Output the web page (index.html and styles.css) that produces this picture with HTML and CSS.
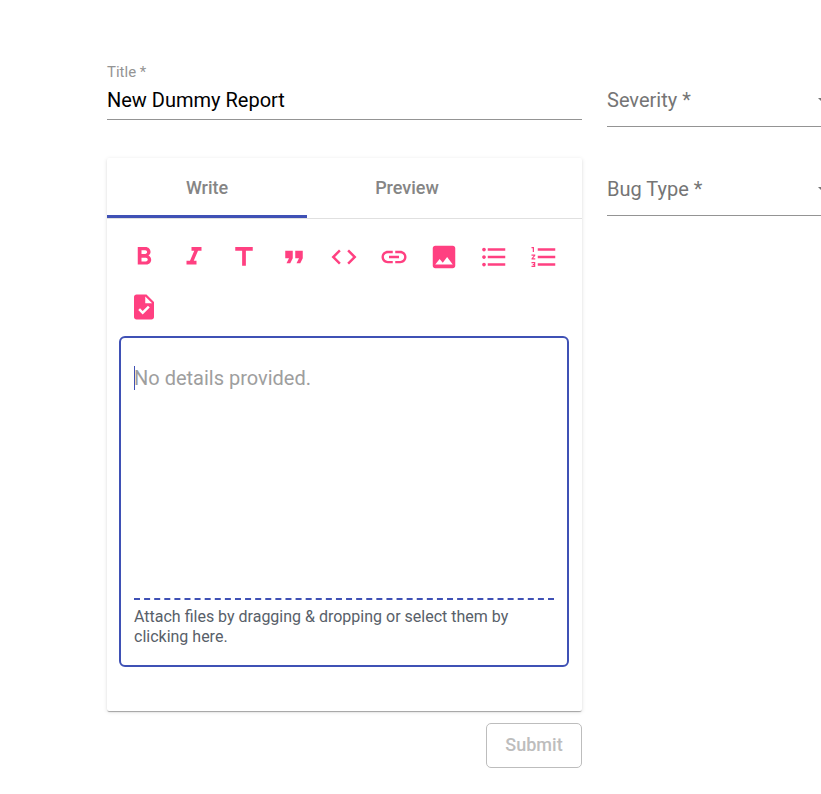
FILE: index.html
```html
<!DOCTYPE html>
<html lang="en">
<head>
<meta charset="utf-8">
<meta name="viewport" content="width=device-width, initial-scale=1">
<title>New report</title>
<link rel="stylesheet" href="styles.css">
</head>
<body>
<form class="report">
  <div class="main">
    <div class="title-field">
      <label for="title">Title *</label>
      <input id="title" type="text" value="New Dummy Report">
    </div>

    <section class="card">
      <div class="tabs" role="tablist">
        <button class="tab active" type="button" role="tab" aria-selected="true">Write</button>
        <button class="tab" type="button" role="tab" aria-selected="false">Preview</button>
      </div>
      <div class="editor">
        <div class="toolbar">
          <button class="tool" type="button" aria-label="Bold"><svg viewBox="0 0 24 24"><path d="M15.6 10.79c.97-.67 1.65-1.77 1.65-2.79 0-2.26-1.75-4-4-4H7v14h7.04c2.09 0 3.71-1.7 3.71-3.79 0-1.52-.86-2.82-2.15-3.42zM10 6.500h3c.83 0 1.5.67 1.5 1.500s-.67 1.500-1.5 1.500h-3v-3zm3.500 9H10v-3h3.500c.83 0 1.500.67 1.500 1.500s-.67 1.500-1.500 1.500z"/></svg></button>
          <button class="tool" type="button" aria-label="Italic"><svg viewBox="0 0 24 24"><path d="M10 4v3h2.210l-3.420 8H6v3h8v-3h-2.210l3.420-8H18V4z"/></svg></button>
          <button class="tool" type="button" aria-label="Heading"><svg viewBox="0 0 24 24"><path d="M5 4v3h5.500v12h3V7H19V4z"/></svg></button>
          <button class="tool" type="button" aria-label="Quote"><svg viewBox="0 0 24 24"><path d="M6 17h3l2-4V7H5v6h3zm8 0h3l2-4V7h-6v6h3z"/></svg></button>
          <button class="tool" type="button" aria-label="Code"><svg viewBox="0 0 24 24"><path d="M9.400 16.600L4.800 12l4.600-4.600L8 6l-6 6 6 6 1.400-1.400zm5.200 0l4.600-4.600-4.600-4.600L16 6l6 6-6 6-1.400-1.400z"/></svg></button>
          <button class="tool" type="button" aria-label="Link"><svg viewBox="0 0 24 24"><path d="M3.900 12c0-1.710 1.390-3.100 3.100-3.100h4V7H7c-2.760 0-5 2.240-5 5s2.240 5 5 5h4v-1.900H7c-1.710 0-3.100-1.390-3.100-3.100zM8 13h8v-2H8v2zm9-6h-4v1.900h4c1.710 0 3.100 1.390 3.100 3.100s-1.390 3.100-3.100 3.100h-4V17h4c2.760 0 5-2.240 5-5s-2.240-5-5-5z"/></svg></button>
          <button class="tool" type="button" aria-label="Image"><svg viewBox="0 0 24 24"><path d="M21 19V5c0-1.100-.9-2-2-2H5c-1.100 0-2 .9-2 2v14c0 1.100.9 2 2 2h14c1.100 0 2-.9 2-2zM8.500 13.500l2.500 3.010L14.500 12l4.500 6H5l3.500-4.500z"/></svg></button>
          <button class="tool" type="button" aria-label="Bulleted list"><svg viewBox="0 0 24 24"><path d="M4 10.500c-.83 0-1.500.67-1.500 1.500s.67 1.500 1.500 1.500 1.500-.67 1.500-1.500-.67-1.500-1.500-1.500zm0-6c-.83 0-1.500.67-1.500 1.500S3.170 7.500 4 7.500 5.500 6.830 5.500 6 4.830 4.500 4 4.500zm0 12c-.83 0-1.500.68-1.500 1.500s.68 1.500 1.500 1.500 1.500-.68 1.500-1.500-.67-1.500-1.500-1.500zM7 19h14v-2H7v2zm0-6h14v-2H7v2zm0-8v2h14V5H7z"/></svg></button>
          <button class="tool" type="button" aria-label="Numbered list"><svg viewBox="0 0 24 24"><path d="M2 17h2v.5H3v1h1v.5H2v1h3v-4H2v1zm1-9h1V4H2v1h1v3zm-1 3h1.800L2 13.100v.9h3v-1H3.200L5 10.900V10H2v1zm5-6v2h14V5H7zm0 14h14v-2H7v2zm0-6h14v-2H7v2z"/></svg></button>
          <button class="tool" type="button" aria-label="Task"><svg viewBox="0 0 24 24"><path d="M14 2H6c-1.100 0-1.990.9-1.990 2L4 20c0 1.100.89 2 1.990 2H18c1.100 0 2-.9 2-2V8l-6-6zm-3.060 16L7.400 14.460l1.410-1.410 2.120 2.120 4.240-4.240 1.410 1.410L10.940 18zM13 9V3.500L18.500 9H13z"/></svg></button>
        </div>
        <div class="box">
          <textarea class="details" aria-label="Details" placeholder="No details provided."></textarea>
          <button class="attach" type="button">Attach files by dragging &amp; dropping or select them by clicking here.</button>
        </div>
      </div>
    </section>

    <button class="submit" type="submit" disabled>Submit</button>
  </div>

  <div class="side">
    <div class="select-field">
      <select id="severity"><option value=""></option><option>Low</option><option>High</option></select>
      <label for="severity">Severity *</label>
      <span class="arrow"></span>
    </div>
    <div class="select-field">
      <select id="bug-type"><option value=""></option><option>Crash</option><option>Display</option></select>
      <label for="bug-type">Bug Type *</label>
      <span class="arrow"></span>
    </div>
  </div>
</form>
</body>
</html>
```

FILE: styles.css
```css
* {
  box-sizing: border-box;
}

body {
  margin: 0;
  overflow-x: clip;
  background: #fff;
  font-family: Roboto, sans-serif;
}

button,
input,
select,
textarea {
  margin: 0;
  padding: 0;
  border: 0;
  outline: 0;
  background: transparent;
  font-family: inherit;
}

.report {
  display: grid;
  grid-template-columns: 19fr 9fr;
  column-gap: 25px;
  align-items: start;
  margin: 0 -11px 0 107px;
  padding: 62px 0 26px;
}

.main {
  display: flex;
  flex-direction: column;
}

.title-field {
  display: flex;
  flex-direction: column;
  border-bottom: 1px solid #949494;
  margin-bottom: 38px;
}

.title-field label {
  font-size: 15px;
  line-height: 20px;
  color: #949494;
}

.title-field input {
  height: 37px;
  padding-bottom: 2px;
  font-size: 20px;
  color: #000;
}

.card {
  border-radius: 2px;
  box-shadow: 0 2px 1px -1px rgba(0, 0, 0, 0.2), 0 1px 1px rgba(0, 0, 0, 0.14), 0 1px 4px rgba(0, 0, 0, 0.12);
}

.tabs {
  display: flex;
  border-bottom: 1px solid #e0e0e0;
}

.tab {
  width: 200px;
  height: 60px;
  padding-top: 1px;
  border-bottom: 3px solid transparent;
  font-size: 18px;
  font-weight: 500;
  color: #858585;
}

.tab.active {
  border-bottom-color: #3f51b5;
}

.editor {
  padding: 13px 13px 44px 12px;
}

.toolbar {
  display: flex;
  flex-wrap: wrap;
  margin-bottom: 4px;
}

.tool {
  display: grid;
  place-items: center;
  width: 50px;
  height: 50px;
}

.tool svg {
  width: 30px;
  height: 30px;
  fill: #ff4081;
}

.box {
  position: relative;
  padding: 13px 13px 18px;
  border: 2px solid #3f51b5;
  border-radius: 6px;
}

.box::before {
  content: "";
  position: absolute;
  top: 28px;
  left: 13px;
  width: 1px;
  height: 24px;
  background: #3f51b5;
}

.details {
  display: block;
  width: 100%;
  height: 247px;
  padding-top: 15px;
  resize: none;
  font-size: 20px;
  line-height: 24px;
}

.details::placeholder {
  color: #9e9e9e;
}

.attach {
  display: block;
  width: 100%;
  padding-top: 7px;
  border-top: 2px dashed #3f51b5;
  font-size: 16px;
  line-height: 20px;
  text-align: left;
  color: #586069;
}

.submit {
  align-self: flex-end;
  width: 96px;
  height: 45px;
  margin-top: 12px;
  padding-bottom: 2px;
  border: 1px solid #bdbdbd;
  border-radius: 5px;
  font-size: 18px;
  font-weight: 500;
  color: #bdbdbd;
}

.side {
  display: grid;
  row-gap: 38px;
  padding-top: 14px;
}

.select-field {
  display: grid;
  align-items: center;
  height: 51px;
  border-bottom: 1px solid #949494;
}

.select-field > * {
  grid-area: 1 / 1;
}

.select-field select {
  width: 100%;
  height: 50px;
  appearance: none;
}

.select-field label {
  padding-bottom: 2px;
  font-size: 20px;
  line-height: 24px;
  color: #757575;
  pointer-events: none;
}

.arrow {
  justify-self: end;
  border: 7px solid transparent;
  border-top-color: #757575;
  border-bottom: 0;
  pointer-events: none;
}
```
